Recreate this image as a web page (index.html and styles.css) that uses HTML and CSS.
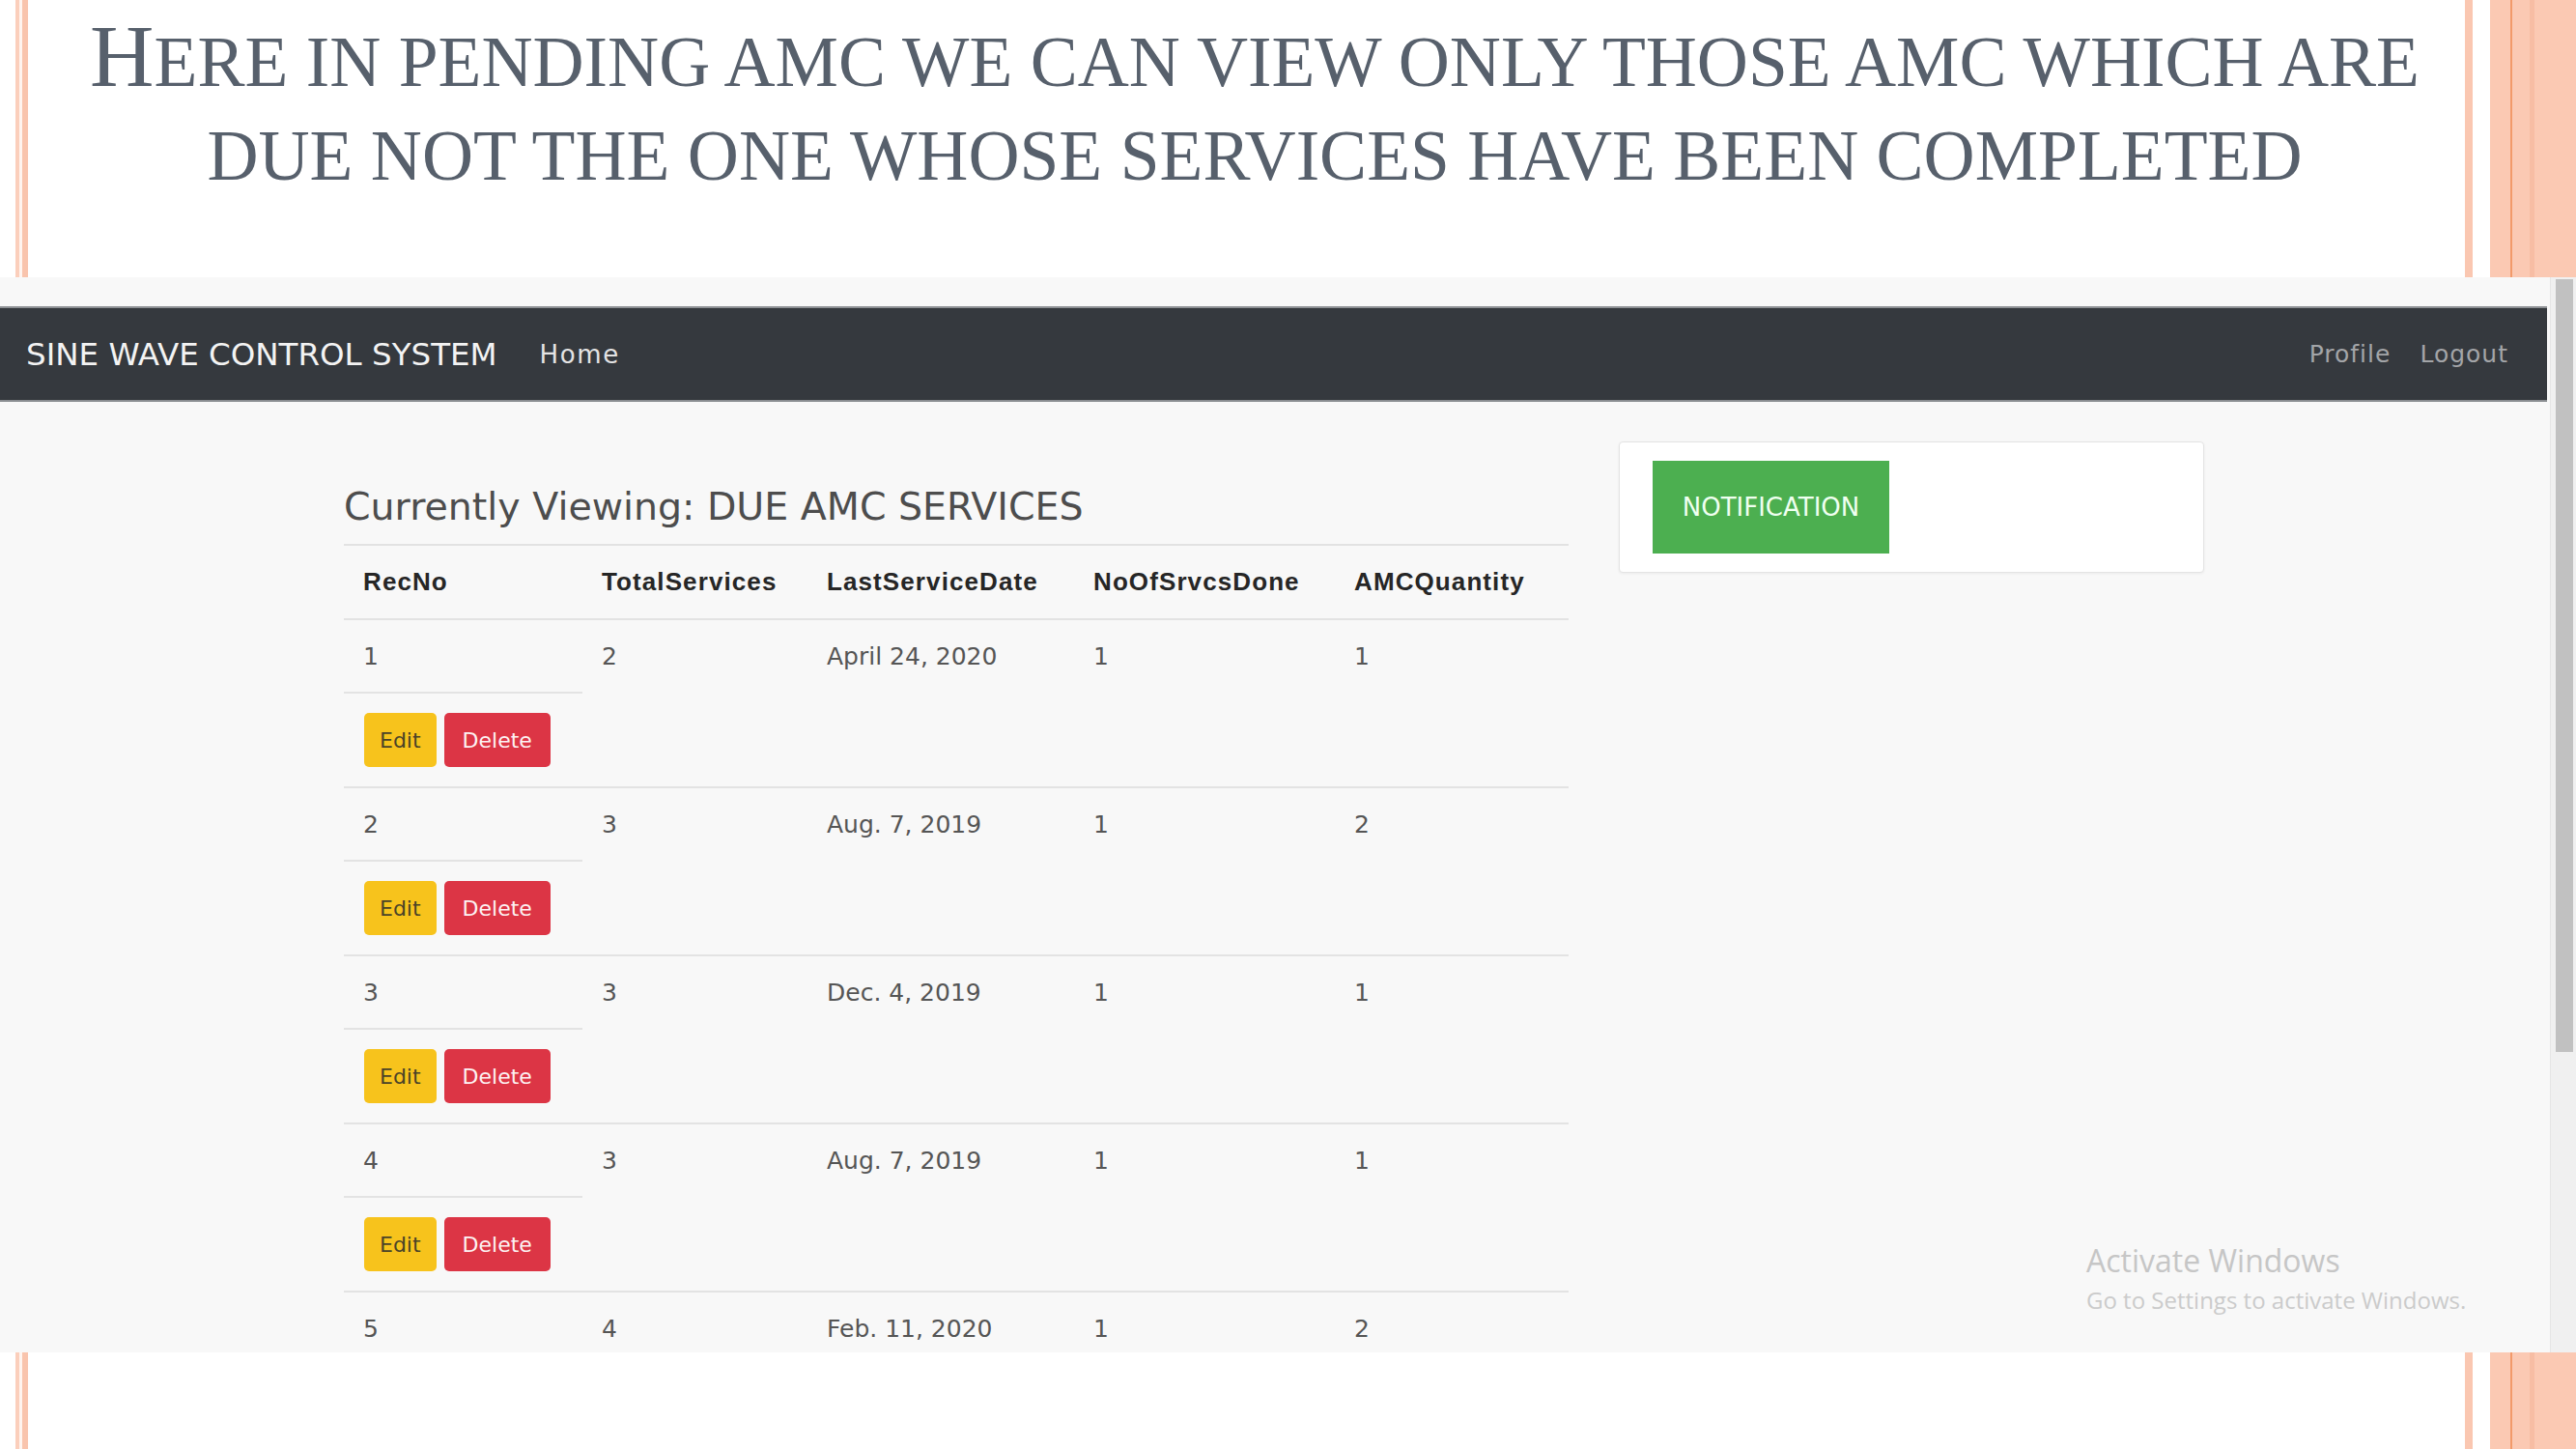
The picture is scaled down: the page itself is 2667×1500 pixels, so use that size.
FILE: index.html
```html
<!DOCTYPE html>
<html lang="en">
<head>
<meta charset="utf-8">
<title>Pending AMC</title>
<link rel="stylesheet" href="styles.css">
</head>
<body>
<div class="slide">
  <header class="slide-title">
    <h1><span class="initial">H</span>ere in pending amc we can view only those amc which are<br>due not the one whose services have been completed</h1>
  </header>

  <section class="shot">
    <div class="page">
      <nav class="navbar">
        <a class="brand">SINE WAVE CONTROL SYSTEM</a>
        <a class="nav-link home">Home</a>
        <div class="nav-right">
          <a class="nav-link muted">Profile</a>
          <a class="nav-link muted">Logout</a>
        </div>
      </nav>

      <div class="content">
        <div class="main-col">
          <h3 class="view-title">Currently Viewing: DUE AMC SERVICES</h3>
          <table class="amc-table">
            <colgroup>
              <col class="c1"><col class="c2"><col class="c3"><col class="c4"><col class="c5">
            </colgroup>
            <thead>
              <tr>
                <th>RecNo</th><th>TotalServices</th><th>LastServiceDate</th><th>NoOfSrvcsDone</th><th>AMCQuantity</th>
              </tr>
            </thead>
            <tbody>
              <tr class="data"><td>1</td><td>2</td><td>April 24, 2020</td><td>1</td><td>1</td></tr>
              <tr class="actions"><td><div class="btns"><span class="btn btn-edit">Edit</span><span class="btn btn-delete">Delete</span></div></td></tr>
              <tr class="data"><td>2</td><td>3</td><td>Aug. 7, 2019</td><td>1</td><td>2</td></tr>
              <tr class="actions"><td><div class="btns"><span class="btn btn-edit">Edit</span><span class="btn btn-delete">Delete</span></div></td></tr>
              <tr class="data"><td>3</td><td>3</td><td>Dec. 4, 2019</td><td>1</td><td>1</td></tr>
              <tr class="actions"><td><div class="btns"><span class="btn btn-edit">Edit</span><span class="btn btn-delete">Delete</span></div></td></tr>
              <tr class="data"><td>4</td><td>3</td><td>Aug. 7, 2019</td><td>1</td><td>1</td></tr>
              <tr class="actions"><td><div class="btns"><span class="btn btn-edit">Edit</span><span class="btn btn-delete">Delete</span></div></td></tr>
              <tr class="data"><td>5</td><td>4</td><td>Feb. 11, 2020</td><td>1</td><td>2</td></tr>
            </tbody>
          </table>
        </div>

        <aside class="side-col">
          <div class="card">
            <button class="btn-notify" type="button">NOTIFICATION</button>
          </div>
        </aside>
      </div>

      <div class="watermark">
        <div class="wm-title">Activate Windows</div>
        <div class="wm-sub">Go to Settings to activate Windows.</div>
      </div>
    </div>
    <div class="scrollbar"><div class="thumb"></div></div>
  </section>
</div>
</body>
</html>
```

FILE: styles.css
```css
* { box-sizing: border-box; }

html, body { margin: 0; padding: 0; }

body {
  width: 2667px;
  height: 1500px;
  overflow: hidden;
  background: #fff linear-gradient(to right,
    #fff 0 16px,
    #fbcfbc 16px 20px,
    #fff4ef 20px 23px,
    #f9c4ad 23px 29px,
    #fff 29px 2552px,
    #fac7b1 2552px 2560px,
    #fff 2560px 2578px,
    #fbc9b3 2578px 2599px,
    #f29a6a 2599px 2601px,
    #fbc9b3 2601px 2619px,
    #f7bda4 2619px 2624px,
    #fbc9b3 2624px 2667px);
}

.slide {
  display: flex;
  flex-direction: column;
}

/* ---------- slide title ---------- */
.slide-title {
  height: 287px;
  padding: 10px 115px 0 46px;
}

.slide-title h1 {
  margin: 0;
  font-family: "Liberation Serif", "Times New Roman", serif;
  font-weight: 400;
  font-size: 73.5px;
  line-height: 97px;
  text-transform: uppercase;
  text-align: center;
  white-space: nowrap;
  color: #57606c;
}

.slide-title .initial { font-size: 92px; }

/* ---------- embedded screenshot ---------- */
.shot {
  position: relative;
  display: flex;
  height: 1113px;
  overflow: hidden;
}

.page {
  flex: 1;
  background: #f8f8f8;
  padding-top: 30px;
  font-family: "DejaVu Sans", sans-serif;
}

.navbar {
  display: flex;
  align-items: center;
  height: 99px;
  margin-right: 3px;
  padding: 0 40px 0 27px;
  background: #35393e;
  border-top: 2px solid #8e9195;
  border-bottom: 2px solid #8a8d91;
}

.brand {
  font-size: 32.5px;
  color: #f3f3f3;
  margin-right: 44px;
}

.nav-link {
  font-size: 25px;
  letter-spacing: 1px;
}

.home {
  color: #e4e4e4;
  font-size: 26px;
  letter-spacing: 1.6px;
}

.nav-right {
  margin-left: auto;
  display: flex;
  gap: 30px;
}

.muted { color: #a3a5a8; }

.content {
  display: flex;
  align-items: flex-start;
  padding-left: 356px;
}

.main-col {
  width: 1268px;
  padding-top: 85px;
}

.view-title {
  margin: 0 0 15px;
  font-weight: 400;
  font-size: 39.5px;
  line-height: 1.2;
  color: #4d4d4d;
}

/* ---------- table ---------- */
.amc-table {
  width: 1268px;
  table-layout: fixed;
  border-collapse: separate;
  border-spacing: 0;
}

.c1 { width: 247px; }
.c2 { width: 233px; }
.c3 { width: 276px; }
.c4 { width: 270px; }
.c5 { width: 242px; }

.amc-table th {
  height: 77px;
  padding: 0 20px;
  border-top: 2px solid #e2e2e2;
  text-align: left;
  vertical-align: middle;
  font-family: "Liberation Sans", Arial, sans-serif;
  font-weight: 700;
  font-size: 26px;
  letter-spacing: 1.1px;
  color: #262626;
}

.amc-table td {
  padding: 0 20px;
  font-size: 25px;
  color: #555;
  vertical-align: middle;
}

.amc-table tr.data td {
  height: 76px;
  border-top: 2px solid #e3e3e3;
}

.amc-table tr.actions td {
  height: 98px;
  border-top: 2px solid #e3e3e3;
  padding-left: 21px;
}

.btns {
  display: flex;
  gap: 8px;
}

.btn {
  display: inline-flex;
  align-items: center;
  height: 56px;
  padding: 0 16px;
  border-radius: 5px;
  font-size: 22px;
}

.btn-edit {
  background: #f7c31c;
  color: #4a4328;
}

.btn-delete {
  padding: 0 19px;
  background: #dc3545;
  color: #fdf2f3;
}

/* ---------- notification card ---------- */
.side-col {
  width: 606px;
  margin-left: 52px;
  padding-top: 41px;
}

.card {
  background: #fff;
  border: 1px solid #e4e4e4;
  border-radius: 4px;
  padding: 19px 34px;
  box-shadow: 0 1px 3px rgba(0, 0, 0, 0.06);
}

.btn-notify {
  display: flex;
  align-items: center;
  justify-content: center;
  width: 245px;
  height: 96px;
  padding: 0;
  border: 0;
  background: #4caf50;
  color: #effff0;
  font-family: "DejaVu Sans", sans-serif;
  font-size: 26px;
}

/* ---------- windows watermark (overlay) ---------- */
.watermark {
  position: absolute;
  left: 2160px;
  top: 999px;
  font-family: "Open Sans", "Noto Sans", sans-serif;
  color: #c6c6c6;
}

.wm-title {
  font-size: 32px;
  line-height: 1.2;
}

.wm-sub {
  margin-top: 8px;
  font-size: 24px;
  line-height: 1.2;
  color: #cbcbcb;
}

/* ---------- scrollbar ---------- */
.scrollbar {
  width: 27px;
  background: #f0f0f0;
  border-left: 1px solid #e6e6e6;
}

.thumb {
  height: 800px;
  margin: 2px 3px 0 5px;
  background: #c1c1c1;
}
```
